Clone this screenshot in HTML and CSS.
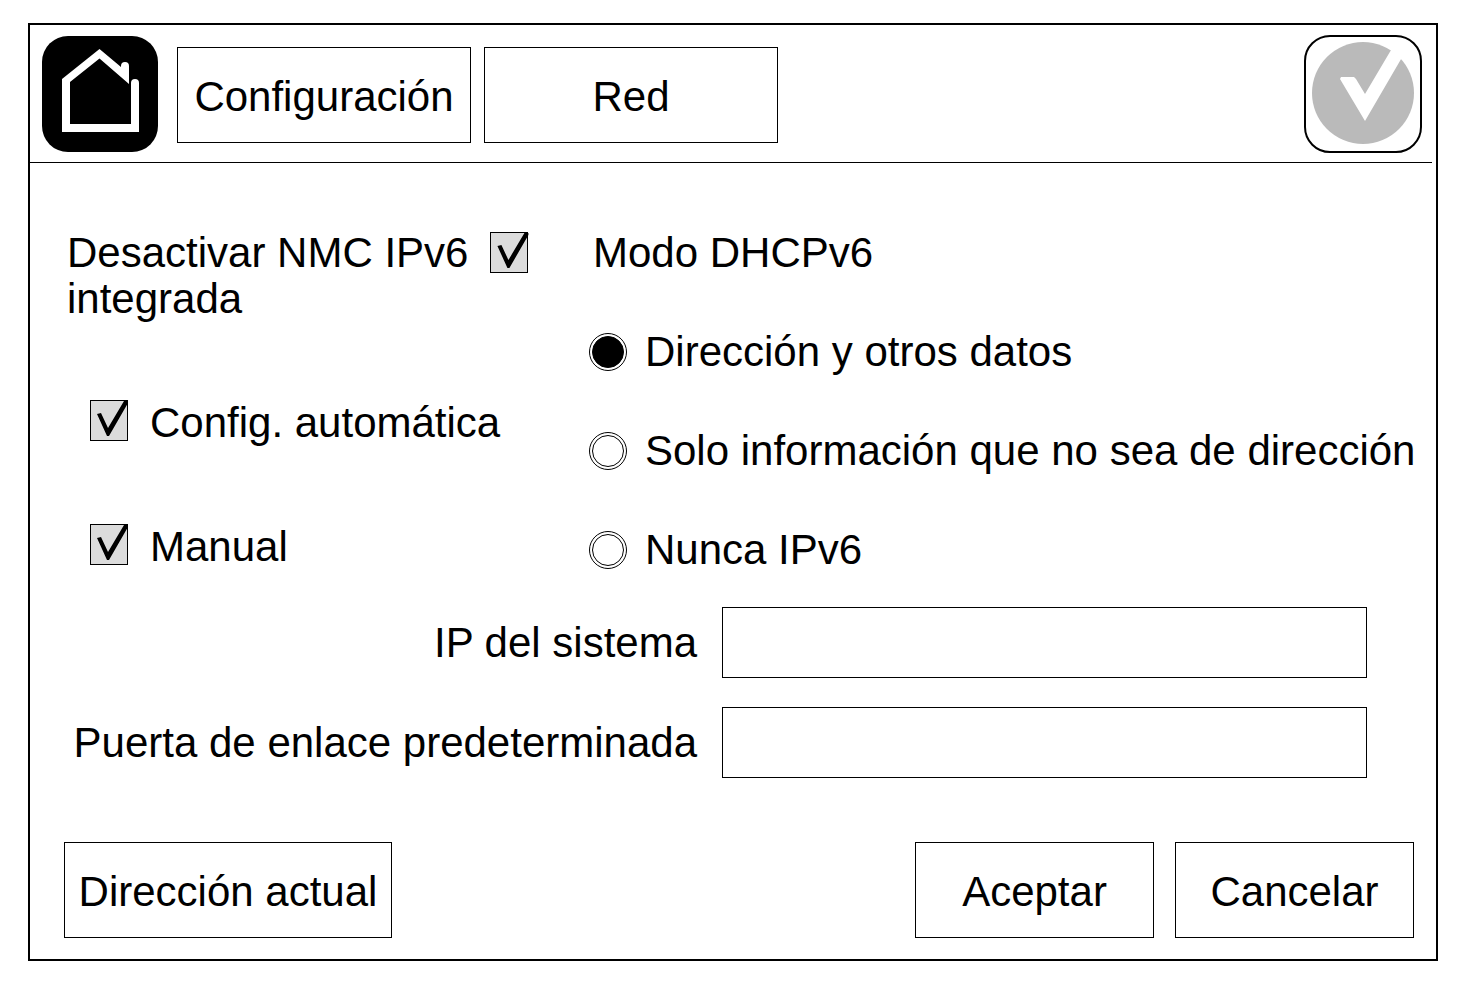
FILE: index.html
```html
<!DOCTYPE html>
<html lang="es">
<head>
  <meta charset="UTF-8" />
  <meta name="viewport" content="width=device-width, initial-scale=1" />
  <title>Configuración - Red</title>
  <link rel="stylesheet" href="styles.css">
</head>
<body>
  <main class="panel">
    <header class="topbar">
      <a class="home" href="#" aria-label="Inicio">
        <svg viewBox="0 0 116 116" width="116" height="116">
          <path d="M57.500 13 L79 31 V30 a4 4 0 0 1 8 0 V48 L57.500 22.500 L28 46 V88 H89 V47 a4 4 0 0 1 8 0 V96 H20 V43 Z" fill="#fff" />
        </svg>
      </a>
      <nav class="crumbs">
        <button class="btn">Configuración</button>
        <button class="btn">Red</button>
      </nav>
      <button class="status" aria-label="Estado">
        <svg viewBox="0 0 114 114" width="114" height="114">
          <circle cx="57" cy="56" r="51" fill="#bababa" />
          <path d="M34 42 L35 40 H48 L50 42 L59 57 L88 8 L98 17 L59 84 Z" fill="#fff" />
        </svg>
      </button>
    </header>

    <form class="content">
      <div class="settings">
        <div class="column">
          <label class="option first">
            <span>Desactivar NMC IPv6<br>integrada</span>
            <input type="checkbox" checked>
          </label>
          <label class="option indent"><input type="checkbox" checked> Config. automática</label>
          <label class="option indent"><input type="checkbox" checked> Manual</label>
        </div>

        <div class="column modes" role="radiogroup" aria-labelledby="modo">
          <span class="title" id="modo">Modo DHCPv6</span>
          <label class="option"><input type="radio" name="modo" checked> Dirección y otros datos</label>
          <label class="option"><input type="radio" name="modo"> Solo información que no sea de dirección</label>
          <label class="option"><input type="radio" name="modo"> Nunca IPv6</label>
        </div>
      </div>

      <div class="fields">
        <label for="ip">IP del sistema</label>
        <input type="text" id="ip">
        <label for="puerta">Puerta de enlace predeterminada</label>
        <input type="text" id="puerta">
      </div>

      <div class="actions">
        <button type="button" class="btn current">Dirección actual</button>
        <button type="button" class="btn small">Aceptar</button>
        <button type="button" class="btn small">Cancelar</button>
      </div>
    </form>
  </main>
</body>
</html>
```
FILE: styles.css
```css
*, *::before {
  box-sizing: border-box;
}

body {
  margin: 0;
  padding: 23px 27px 23px 28px;
  background: #fff;
  color: #000;
  font-family: "Liberation Sans", Arial, sans-serif;
  font-size: 42px;
  line-height: 46px;
}

button, input {
  margin: 0;
  font: inherit;
  color: inherit;
}

.panel {
  border: 2px solid #000;
}

/* top bar */
.topbar {
  display: flex;
  align-items: center;
  margin-right: 4px;
  padding: 10px 10px 9px 12px;
  border-bottom: 1px solid #000;
}

.home {
  display: block;
  height: 116px;
  background: #000;
  border-radius: 26px;
}

.crumbs {
  display: flex;
  gap: 13px;
  margin: 2px 0 0 19px;
}

.btn {
  width: 294px;
  height: 96px;
  padding: 4px 0 0;
  background: #fff;
  border: 1px solid #000;
  border-radius: 0;
  white-space: nowrap;
}

.status {
  width: 118px;
  height: 118px;
  margin-left: auto;
  padding: 0;
  background: #fff;
  border: 2px solid #000;
  border-radius: 26px;
}

.status svg {
  display: block;
}

/* settings */
.content {
  padding: 67px 22px 21px 34px;
}

.settings {
  display: grid;
  grid-template-columns: 522px 1fr;
  padding-left: 3px;
}

.column {
  display: flex;
  flex-direction: column;
  gap: 78px;
}

.modes {
  gap: 53px;
}

.title {
  padding-left: 4px;
}

.option {
  display: flex;
  align-items: flex-start;
  gap: 22px;
  white-space: nowrap;
}

.modes .option {
  align-items: center;
  gap: 18px;
}

.indent {
  padding-left: 23px;
}

input[type="checkbox"] {
  appearance: none;
  flex: none;
  width: 38px;
  height: 41px;
  background: #dcdcdc;
  border: 1px solid #000;
}

.first input[type="checkbox"] {
  margin-top: 2px;
}

input[type="checkbox"]:checked::before {
  content: "";
  display: block;
  width: 38px;
  height: 38px;
  background: #000;
  clip-path: polygon(6px 13px, 10px 12px, 17px 27px, 33px 0, 37px 0, 37px 2px, 18px 35px, 16px 35px);
}

input[type="radio"] {
  appearance: none;
  flex: none;
  width: 38px;
  height: 38px;
  padding: 2px;
  border: 1px solid #000;
  border-radius: 50%;
}

input[type="radio"]::before {
  content: "";
  display: block;
  width: 32px;
  height: 32px;
  border: 1px solid #000;
  border-radius: 50%;
}

input[type="radio"]:checked::before {
  background: #000;
}

/* address fields */
.fields {
  display: grid;
  grid-template-columns: 633px 1fr;
  align-items: center;
  gap: 29px 25px;
  padding: 34px 47px 0 0;
  text-align: right;
}

.fields input {
  width: 100%;
  height: 71px;
  padding: 0 16px;
  border: 1px solid #000;
}

.actions {
  display: flex;
  gap: 21px;
  margin-top: 64px;
}

.current {
  width: 328px;
  margin-right: auto;
}

.small {
  width: 239px;
}
```
